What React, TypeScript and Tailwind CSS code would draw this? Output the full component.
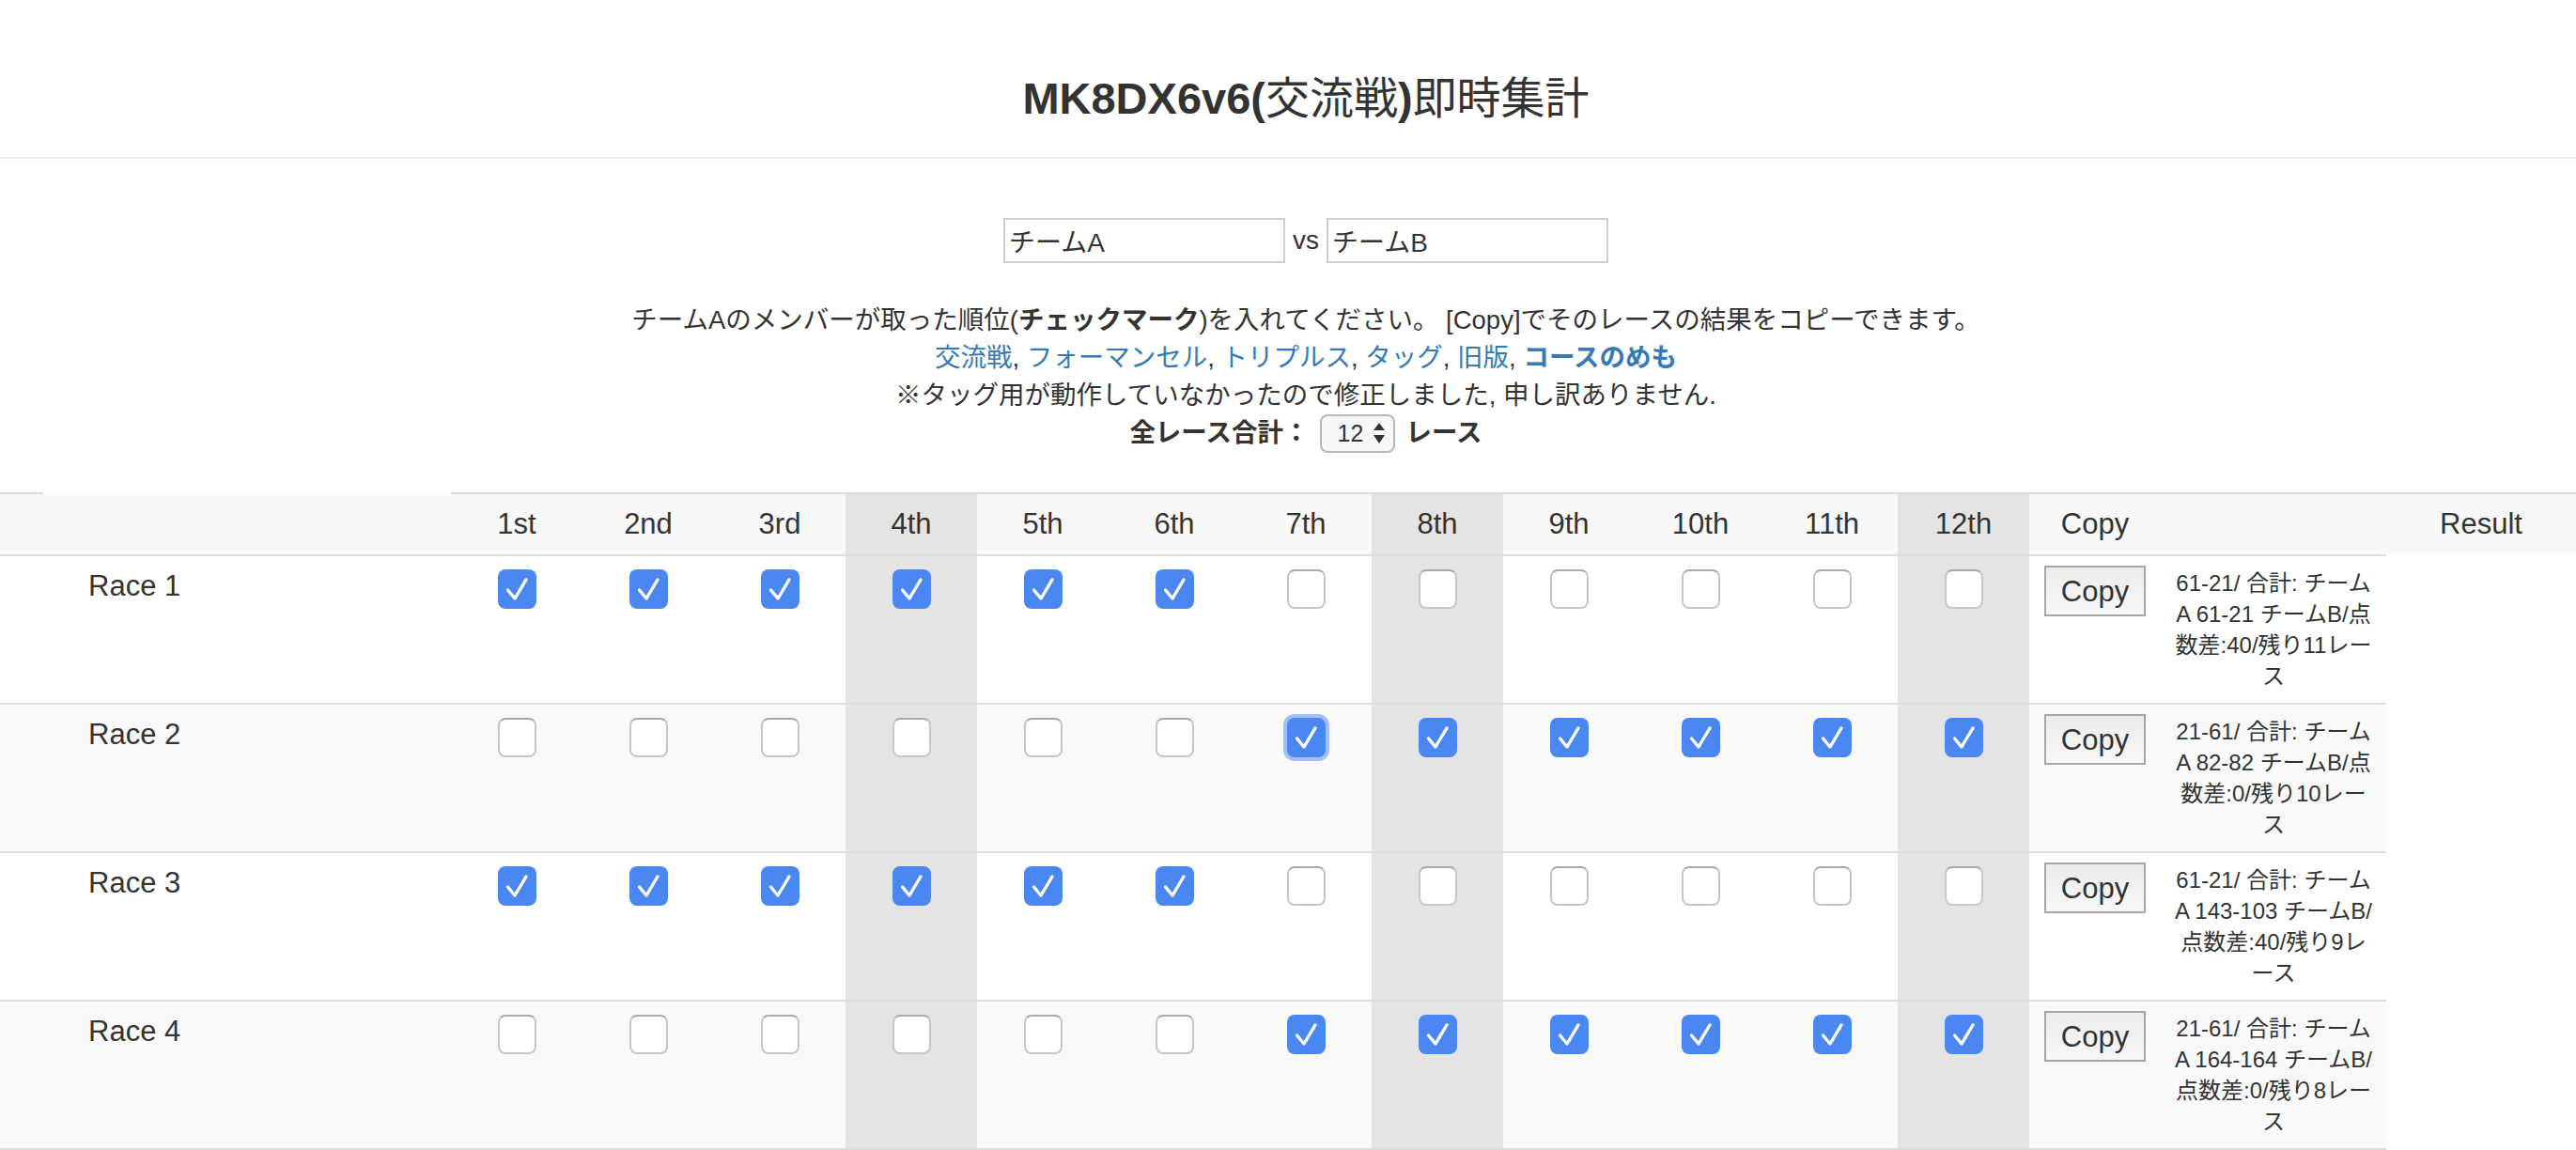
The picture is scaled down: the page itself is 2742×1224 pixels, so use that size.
import React from 'react';

const PLACES = ['1st', '2nd', '3rd', '4th', '5th', '6th', '7th', '8th', '9th', '10th', '11th', '12th'];

// every 4th column (4th, 8th, 12th) is shaded
const isShaded = (i: number) => i % 4 === 3;

type Race = {
  name: string;
  checks: boolean[];
  result: string[];
  focus?: number;
};

const TOP_SIX = [true, true, true, true, true, true, false, false, false, false, false, false];
const BOTTOM_SIX = TOP_SIX.map((v) => !v);

const races: Race[] = [
  { name: 'Race 1', checks: TOP_SIX, result: ['61-21/ 合計: チーム', 'A 61-21 チームB/点', '数差:40/残り11レー', 'ス'] },
  { name: 'Race 2', checks: BOTTOM_SIX, focus: 6, result: ['21-61/ 合計: チーム', 'A 82-82 チームB/点', '数差:0/残り10レー', 'ス'] },
  { name: 'Race 3', checks: TOP_SIX, result: ['61-21/ 合計: チーム', 'A 143-103 チームB/', '点数差:40/残り9レ', 'ース'] },
  { name: 'Race 4', checks: BOTTOM_SIX, result: ['21-61/ 合計: チーム', 'A 164-164 チームB/', '点数差:0/残り8レー', 'ス'] },
];

const Checkbox = ({ checked, focused }: { checked: boolean; focused?: boolean }) => (
  <span
    className={`inline-flex h-[42px] w-[41px] items-center justify-center rounded-[8px] ${
      checked
        ? 'bg-[#4b87f1]'
        : 'border-2 border-[#c6c6c6] border-t-[#a9a9a9] bg-white'
    } ${focused ? 'ring-4 ring-[#4b87f1]/50' : ''}`}
  >
    {checked && (
      <svg viewBox="0 0 41 42" className="h-[42px] w-[41px]">
        <path
          d="M10.5 22 L18 31 L30 11"
          fill="none"
          stroke="white"
          strokeWidth="3.4"
          strokeLinecap="round"
          strokeLinejoin="round"
        />
      </svg>
    )}
  </span>
);

const links = ['交流戦', 'フォーマンセル', 'トリプルス', 'タッグ', '旧版'];

export default function App() {
  return (
    <div className="min-h-screen bg-white font-['Liberation_Sans','Noto_Sans_CJK_JP',sans-serif] text-[#333]">
      {/* Title bar */}
      <header className="h-[169px] border-b-2 border-[#eee] pl-[38px] pt-[77px] text-center">
        <h3 className="text-[47px] font-bold leading-[56px]">
          MK8DX6v6(<span className="font-normal">交流戦</span>)<span className="font-normal">即時集計</span>
        </h3>
      </header>

      {/* Team names + notes */}
      <div className="pl-[38px] text-center">
        <div className="mt-[63px] flex items-center justify-center gap-[8px] text-[28px]">
          <input
            defaultValue="チームA"
            className="h-[48px] w-[300px] border-2 border-[#cfcfcf] px-[4px] text-[#333] outline-none"
          />
          <span>vs</span>
          <input
            defaultValue="チームB"
            className="h-[48px] w-[300px] border-2 border-[#cfcfcf] px-[4px] text-[#333] outline-none"
          />
        </div>

        <div className="mt-[41px] text-[27.5px] leading-[40px]">
          <p>
            チームAのメンバーが取った順位(<b>チェックマーク</b>)を入れてください。 [Copy]でそのレースの結果をコピーできます。
          </p>
          <p>
            {links.map((l) => (
              <React.Fragment key={l}>
                <a href="#" className="text-[#337ab7]">
                  {l}
                </a>
                ,{' '}
              </React.Fragment>
            ))}
            <a href="#" className="font-bold text-[#337ab7]">
              コースのめも
            </a>
          </p>
          <p>※タッグ用が動作していなかったので修正しました, 申し訳ありません.</p>
          <div className="flex h-[40px] items-center justify-center font-bold">
            <span>全レース合計：</span>
            <span className="ml-[11px] inline-flex h-[41px] w-[80px] items-center rounded-[8px] border-2 border-[#b8b8b8] bg-[#f7f7f7] pl-[17px] text-[25px] font-normal">
              12
              <svg viewBox="0 0 12 22" className="ml-[11px] h-[22px] w-[12px]">
                <path d="M6 0 L12 8 L0 8 Z" fill="#333" />
                <path d="M0 13 L12 13 L6 22 Z" fill="#333" />
              </svg>
            </span>
            <span className="ml-[12px]">レース</span>
          </div>
        </div>
      </div>

      {/* Race table */}
      <table className="mt-[43px] w-full table-fixed border-separate border-spacing-0 text-[31px]">
        <colgroup>
          <col className="w-[480px]" />
          {PLACES.map((p) => (
            <col key={p} className="w-[140px]" />
          ))}
          <col className="w-[140px]" />
          <col className="w-[240px]" />
          <col />
        </colgroup>
        <thead>
          <tr>
            <th className="h-[66px] bg-[#f8f8f8] bg-[linear-gradient(to_right,#ddd_46px,#fff_46px)] bg-[length:100%_2px] bg-top bg-no-repeat p-0" />
            {PLACES.map((p, i) => (
              <th
                key={p}
                className={`h-[66px] border-t-2 border-[#ddd] p-0 text-center font-normal ${
                  isShaded(i) ? 'bg-[#e4e4e4]' : 'bg-[#f8f8f8]'
                }`}
              >
                {p}
              </th>
            ))}
            <th className="h-[66px] border-t-2 border-[#ddd] bg-[#f8f8f8] p-0 text-center font-normal">Copy</th>
            <th className="h-[66px] border-t-2 border-[#ddd] bg-[#f8f8f8] p-0" />
            <th className="h-[66px] border-t-2 border-[#ddd] bg-[#f8f8f8] p-0 text-center font-normal">Result</th>
          </tr>
        </thead>
        <tbody>
          {races.map((race, r) => {
            const rowBg = r % 2 === 1 ? 'bg-[#f9f9f9]' : 'bg-white';
            const edge = r === races.length - 1 ? 'border-y-2' : 'border-t-2';
            return (
              <tr key={race.name}>
                <td className={`${edge} border-[#ddd] pl-[94px] pt-[12px] align-top leading-[40px] ${rowBg}`}>
                  {race.name}
                </td>
                {race.checks.map((c, i) => (
                  <td
                    key={i}
                    className={`${edge} border-[#ddd] pt-[14px] align-top ${isShaded(i) ? 'bg-[#e4e4e4]' : rowBg}`}
                  >
                    <div className="flex justify-center">
                      <Checkbox checked={c} focused={race.focus === i} />
                    </div>
                  </td>
                ))}
                <td className={`${edge} border-[#ddd] pt-[10px] align-top ${rowBg}`}>
                  <div className="flex justify-center">
                    <button className="h-[54px] w-[108px] border-2 border-[#a6a6a6] bg-linear-to-b from-[#ececec] to-[#f7f7f7] text-[31px] leading-none text-[#333]">
                      Copy
                    </button>
                  </div>
                </td>
                <td className={`${edge} border-[#ddd] px-[8px] pb-[12px] pt-[12px] text-center align-top text-[24px] leading-[33px] ${rowBg}`}>
                  {race.result.map((line, i) => (
                    <div key={i}>{line}</div>
                  ))}
                </td>
              </tr>
            );
          })}
        </tbody>
      </table>
    </div>
  );
}
